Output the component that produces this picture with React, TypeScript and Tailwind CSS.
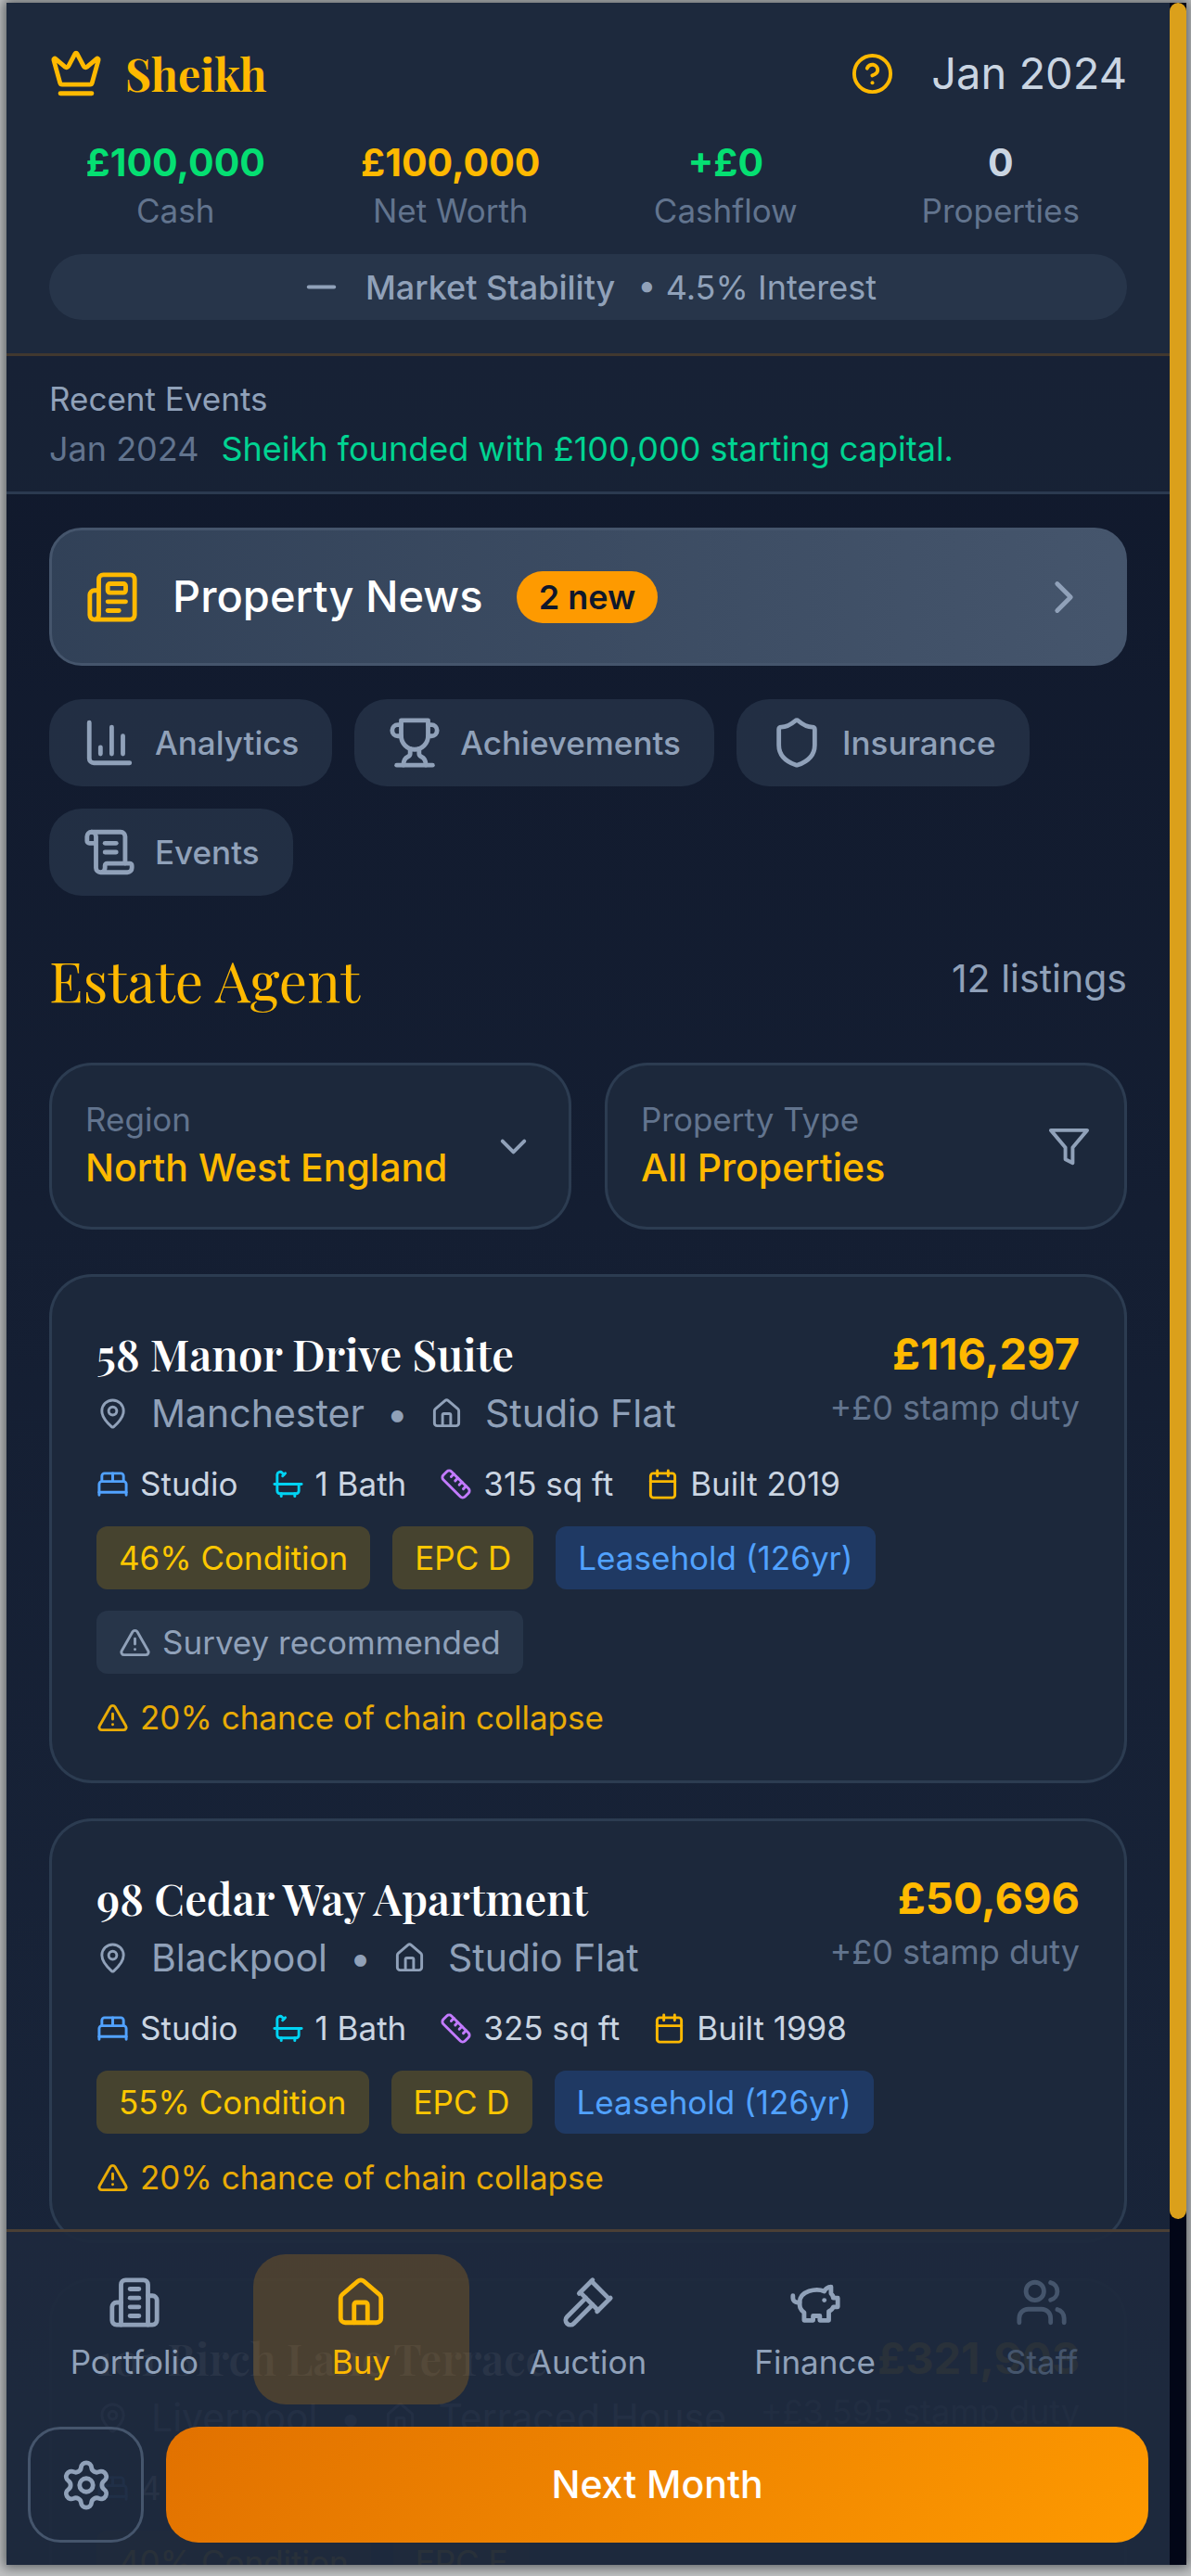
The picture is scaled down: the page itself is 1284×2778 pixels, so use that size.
import { useState } from 'react';
import {
  Bath, BedDouble, Calendar, ChartColumn, ChevronDown, ChevronRight, CircleQuestionMark, Crown, Gavel,
  House, MapPin, Minus, Newspaper, Ruler, ScrollText, Settings, Shield, TriangleAlert, Users,
} from 'lucide-react';

type IconProps = { className?: string };

const svgProps = {
  viewBox: '0 0 24 24', fill: 'none', stroke: 'currentColor', strokeWidth: 2,
  strokeLinecap: 'round', strokeLinejoin: 'round', 'aria-hidden': true,
} as const;

const TrophyIcon = ({ className }: IconProps) => (
  <svg {...svgProps} className={className}>
    <path d="M6 9H4.5a2.5 2.5 0 0 1 0-5H6" />
    <path d="M18 9h1.5a2.5 2.5 0 0 0 0-5H18" />
    <path d="M4 22h16" />
    <path d="M10 14.66V17c0 .55-.47.98-.97 1.21C7.85 18.75 7 20.24 7 22" />
    <path d="M14 14.66V17c0 .55.47.98.97 1.21C16.15 18.75 17 20.24 17 22" />
    <path d="M18 2H6v7a6 6 0 0 0 12 0V2Z" />
  </svg>
);

const FunnelIcon = ({ className }: IconProps) => (
  <svg {...svgProps} className={className}>
    <polygon points="22 3 2 3 10 12.46 10 19 14 21 14 12.46 22 3" />
  </svg>
);

const BuildingIcon = ({ className }: IconProps) => (
  <svg {...svgProps} className={className}>
    <path d="M6 22V4a2 2 0 0 1 2-2h8a2 2 0 0 1 2 2v18Z" />
    <path d="M6 12H4a2 2 0 0 0-2 2v6a2 2 0 0 0 2 2h2" />
    <path d="M18 9h2a2 2 0 0 1 2 2v9a2 2 0 0 1-2 2h-2" />
    <path d="M10 6h4" />
    <path d="M10 10h4" />
    <path d="M10 14h4" />
    <path d="M10 18h4" />
  </svg>
);

const PiggyIcon = ({ className }: IconProps) => (
  <svg {...svgProps} className={className}>
    <path d="M19 5c-1.5 0-2.8 1.4-3 2-3.5-1.5-11-.3-11 5 0 1.8 0 3 2 4.5V20h4v-2h3v2h4v-4c1-.5 1.7-1 2-2h2v-4h-2c0-1-.5-1.5-1-2V5z" />
    <path d="M2 9v1c0 1.1.9 2 2 2h1" />
    <path d="M16 11h.01" />
  </svg>
);

const stats = [
  { label: 'Cash', value: '£100,000', color: 'text-green-400' },
  { label: 'Net Worth', value: '£100,000', color: 'text-amber-400' },
  { label: 'Cashflow', value: '+£0', color: 'text-green-400' },
  { label: 'Properties', value: '0', color: 'text-slate-300' },
];

const shortcuts = [
  { icon: ChartColumn, label: 'Analytics' },
  { icon: TrophyIcon, label: 'Achievements' },
  { icon: Shield, label: 'Insurance' },
  { icon: ScrollText, label: 'Events' },
];

const tabs = [
  { icon: BuildingIcon, label: 'Portfolio' },
  { icon: House, label: 'Buy' },
  { icon: Gavel, label: 'Auction' },
  { icon: PiggyIcon, label: 'Finance' },
  { icon: Users, label: 'Staff', locked: true },
];

const YELLOW = 'bg-yellow-500/20 text-yellow-400';
const BLUE = 'bg-blue-500/20 text-blue-400';

const BED = { icon: BedDouble, color: 'text-blue-400' };
const BATH = { icon: Bath, color: 'text-cyan-400' };
const SIZE = { icon: Ruler, color: 'text-purple-400' };
const BUILT = { icon: Calendar, color: 'text-amber-400' };

type Listing = {
  title: string;
  city: string;
  kind: string;
  price: string;
  duty: string;
  facts: { icon: typeof Bath; color: string; text: string }[];
  badges: { text: string; style: string }[];
  survey?: boolean;
  warning?: string;
};

const listings: Listing[] = [
  {
    title: '58 Manor Drive Suite', city: 'Manchester', kind: 'Studio Flat', price: '£116,297', duty: '+£0 stamp duty',
    facts: [{ ...BED, text: 'Studio' }, { ...BATH, text: '1 Bath' }, { ...SIZE, text: '315 sq ft' }, { ...BUILT, text: 'Built 2019' }],
    badges: [{ text: '46% Condition', style: YELLOW }, { text: 'EPC D', style: YELLOW }, { text: 'Leasehold (126yr)', style: BLUE }],
    survey: true,
    warning: '20% chance of chain collapse',
  },
  {
    title: '98 Cedar Way Apartment', city: 'Blackpool', kind: 'Studio Flat', price: '£50,696', duty: '+£0 stamp duty',
    facts: [{ ...BED, text: 'Studio' }, { ...BATH, text: '1 Bath' }, { ...SIZE, text: '325 sq ft' }, { ...BUILT, text: 'Built 1998' }],
    badges: [{ text: '55% Condition', style: YELLOW }, { text: 'EPC D', style: YELLOW }, { text: 'Leasehold (126yr)', style: BLUE }],
    warning: '20% chance of chain collapse',
  },
  {
    title: '101 Birch Lane Terrace', city: 'Liverpool', kind: 'Terraced House', price: '£321,903', duty: '+£3,595 stamp duty',
    facts: [{ ...BED, text: '4' }],
    badges: [{ text: '40% Condition', style: YELLOW }, { text: 'EPC E', style: YELLOW }],
  },
];

const SERIF = 'font-["Playfair_Display","Liberation_Serif",serif]';

const ListingCard = ({ listing }: { listing: Listing }) => (
  <article className="shrink-0 rounded-[46px] border-[3px] border-slate-700/80 bg-[#1c283b] px-12 pt-12 pb-[45px]">
    <div className="flex justify-between">
      <div>
        <h3 className={`${SERIF} text-[47px] leading-[70px] font-semibold text-white`}>{listing.title}</h3>
        <p className="flex items-center gap-6 text-[41px] leading-[58px] text-slate-400">
          <MapPin className="size-[35px]" />
          <span>{listing.city}</span>
          <span>•</span>
          <House className="size-[35px]" />
          <span>{listing.kind}</span>
        </p>
      </div>
      <div className="text-right">
        <p className="text-[47px] leading-[70px] font-bold text-amber-400">{listing.price}</p>
        <p className="text-[36px] leading-[46px] text-slate-500">{listing.duty}</p>
      </div>
    </div>

    <ul className="mt-6 flex gap-9 text-[35px] leading-[46px] text-slate-300">
      {listing.facts.map((f) => (
        <li key={f.text} className="flex items-center gap-3">
          <f.icon className={`size-[35px] ${f.color}`} />
          {f.text}
        </li>
      ))}
    </ul>

    <div className="mt-[23px] flex flex-wrap gap-x-6 gap-y-[23px] text-[35px] leading-[46px]">
      {listing.badges.map((b) => (
        <span key={b.text} className={`rounded-xl px-6 py-[11px] ${b.style}`}>{b.text}</span>
      ))}
      {listing.survey && (
        <span className="flex items-center gap-3 rounded-xl bg-slate-700/50 px-6 py-[11px] text-slate-400">
          <TriangleAlert className="size-[35px]" />
          Survey recommended
        </span>
      )}
    </div>

    {listing.warning && (
      <p className="mt-6 flex items-center gap-3 text-[35px] leading-[46px] text-amber-400/90">
        <TriangleAlert className="size-[35px]" />
        {listing.warning}
      </p>
    )}
  </article>
);

const App = () => {
  const [activeTab, setActiveTab] = useState('Buy');

  return (
    <div className="h-screen bg-[#c0c2c3] pt-[3px] pr-[5px] pb-3 pl-[7px] font-[Inter,sans-serif]">
      <div className="flex h-full shadow-[0_0_12px_3px_rgba(30,35,40,0.6)]">
        <div className="relative flex min-w-0 flex-1 flex-col overflow-hidden bg-linear-to-b from-[#0f172a] to-[#1a263b]">
          <header className="shrink-0 border-b-[3px] border-[#41382f] bg-slate-800 px-[46px] py-9">
            <div className="flex h-20 items-center justify-between">
              <div className="flex items-center gap-6 text-amber-400">
                <Crown className="size-[58px]" />
                <h1 className={`${SERIF} text-[48px] font-bold`}>Sheikh</h1>
              </div>
              <div className="flex items-center gap-10">
                <button type="button" aria-label="Help" className="text-amber-400">
                  <CircleQuestionMark className="size-[47px]" />
                </button>
                <span className="text-[47px] text-slate-300">Jan 2024</span>
              </div>
            </div>

            <dl className="mt-[27px] grid grid-cols-4 gap-6 text-center">
              {stats.map((s) => (
                <div key={s.label} className="flex flex-col-reverse">
                  <dt className="text-[35px] leading-[46px] text-slate-500">{s.label}</dt>
                  <dd className={`text-[41px] leading-[58px] font-bold ${s.color}`}>{s.value}</dd>
                </div>
              ))}
            </dl>

            <div className="mt-6 flex items-center justify-center gap-6 rounded-full bg-slate-700/50 py-3 text-[36px] leading-[46px] text-slate-400">
              <Minus className="size-[47px]" />
              <span className="font-medium">Market Stability</span>
              <span>• 4.5% Interest</span>
            </div>
          </header>

          <section className="shrink-0 border-b-[3px] border-slate-700/80 bg-slate-800/50 px-[46px] py-[23px] text-[35px] leading-[46px]">
            <h2 className="text-slate-400">Recent Events</h2>
            <p className="mt-2 flex gap-6 text-[36px]">
              <span className="text-slate-500">Jan 2024</span>
              <span className="text-emerald-400">Sheikh founded with £100,000 starting capital.</span>
            </p>
          </section>

          <main className="flex flex-col px-[46px] pt-9">
            <button
              type="button"
              className="flex h-[149px] items-center rounded-[35px] border-[3px] border-slate-600 bg-linear-to-r from-slate-700 to-slate-600 px-9 text-white"
            >
              <Newspaper className="size-[58px] text-amber-400" />
              <span className="ml-9 text-[47px] font-medium">Property News</span>
              <span className="ml-9 rounded-full bg-amber-500 px-6 py-[5px] text-[36px] leading-[46px] font-semibold text-slate-900">2 new</span>
              <ChevronRight className="ml-auto size-[58px] text-slate-400" />
            </button>

            <div className="mt-9 flex flex-wrap gap-6">
              {shortcuts.map((s) => (
                <button
                  key={s.label}
                  type="button"
                  className="flex h-[94px] items-center gap-5 rounded-[35px] bg-slate-700/50 px-9 text-[35px] font-medium text-slate-400"
                >
                  <s.icon className="size-[58px]" />
                  {s.label}
                </button>
              ))}
            </div>

            <div className="mt-[50px] flex h-20 items-center justify-between">
              <h2 className={`${SERIF} text-[60px] text-amber-400`}>Estate Agent</h2>
              <span className="text-[41px] text-slate-400">12 listings</span>
            </div>

            {/* Filters */}
            <div className="mt-[50px] grid grid-cols-2 gap-9">
              <div className="flex h-[180px] items-center rounded-[46px] border-[3px] border-slate-700/80 bg-[#1c283b] px-9">
                <div className="min-w-0 flex-1">
                  <label htmlFor="region" className="block text-[35px] leading-[46px] text-slate-500">Region</label>
                  <select id="region" className="block w-full appearance-none text-[41px] leading-[58px] font-medium text-amber-400">
                    <option>North West England</option>
                  </select>
                </div>
                <ChevronDown className="size-[47px] text-slate-400" />
              </div>
              <div className="flex h-[180px] items-center rounded-[46px] border-[3px] border-slate-700/80 bg-[#1c283b] px-9">
                <div className="min-w-0 flex-1">
                  <label htmlFor="type" className="block text-[35px] leading-[46px] text-slate-500">Property Type</label>
                  <select id="type" className="block w-full appearance-none text-[41px] leading-[58px] font-medium text-amber-400">
                    <option>All Properties</option>
                  </select>
                </div>
                <FunnelIcon className="size-[47px] text-slate-400" />
              </div>
            </div>

            <div className="mt-12 flex flex-col gap-[38px]">
              {listings.map((l) => (
                <ListingCard key={l.title} listing={l} />
              ))}
            </div>
          </main>

          {/* Bottom bar floats over the scrolled list */}
          <div className="absolute inset-x-0 bottom-0 border-t-[3px] border-[#4a3f35] bg-slate-800/95 py-6">
            <nav className="flex gap-[11px] px-[21px]">
              {tabs.map((t) => (
                <button
                  key={t.label}
                  type="button"
                  disabled={t.locked}
                  onClick={() => setActiveTab(t.label)}
                  className={`flex flex-1 flex-col items-center gap-3 rounded-[35px] py-[23px] text-[35px] leading-[46px] ${
                    t.locked ? 'text-slate-600' : activeTab === t.label ? 'bg-amber-500/20 text-amber-400' : 'text-slate-400'
                  }`}
                >
                  <t.icon className="size-[58px]" />
                  {t.label}
                </button>
              ))}
            </nav>
            <div className="mt-6 flex gap-6 px-[23px]">
              <button
                type="button"
                aria-label="Settings"
                className="flex size-[125px] items-center justify-center rounded-[35px] border-[3px] border-slate-600 text-slate-400"
              >
                <Settings className="size-[58px]" />
              </button>
              <button type="button" className="flex-1 rounded-[35px] bg-linear-135 from-amber-600 to-amber-500 text-[41px] font-medium text-white">
                Next Month
              </button>
            </div>
          </div>
        </div>

        {/* Scroll track */}
        <div className="w-[18px] bg-[#020617]">
          <div className="h-[86.5%] rounded-full bg-[#dba01b]" />
        </div>
      </div>
    </div>
  );
};

export default App;
